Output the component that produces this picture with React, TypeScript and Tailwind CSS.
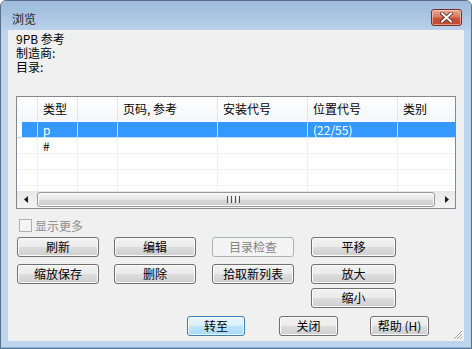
import React from "react";

const colW = ["w-[21px]", "w-[40px]", "w-[40px]", "w-[100px]", "w-[90px]", "w-[90px]", "w-[57px]"];
const headers = ["", "类型", "", "页码, 参考", "安装代号", "位置代号", "类别"];
const rows: { cells: string[]; sel?: boolean }[] = [
  { cells: ["", "p", "", "", "", "(22/55)", ""], sel: true },
  { cells: ["", "#", "", "", "", "", ""] },
  { cells: ["", "", "", "", "", "", ""] },
  { cells: ["", "", "", "", "", "", ""] },
  { cells: ["", "", "", "", "", "", ""] },
];

function Btn({
  label,
  w = "w-[82px]",
  variant = "normal",
}: {
  label: string;
  w?: string;
  variant?: "normal" | "default" | "disabled";
}) {
  const base = "h-[20px] rounded-[3px] border flex items-center justify-center text-[12px] leading-[14px] shrink-0";
  const v =
    variant === "default"
      ? "border-[#3c7fb1] bg-[linear-gradient(to_bottom,#eaf6fd_0%,#d9f0fc_50%,#bee6fd_50%,#a7d9f5_100%)] shadow-[inset_0_0_0_1px_#f4fbff] text-black"
      : variant === "disabled"
      ? "border-[#adb2b5] bg-[#f4f4f4] text-[#838383]"
      : "border-[#707070] bg-[linear-gradient(to_bottom,#f2f2f2_0%,#ebebeb_50%,#dddddd_50%,#cfcfcf_100%)] shadow-[inset_0_0_0_1px_#fcfcfc] text-black";
  return <div className={`${base} ${v} ${w}`}>{label}</div>;
}

export default function App() {
  return (
    <div className="w-[472px] h-[349px] flex flex-col bg-[#bcd4ec] border border-[#5b6f86] rounded-t-[6px] overflow-hidden font-['Noto_Sans_CJK_SC',sans-serif] text-[12px] text-black select-none">
      {/* Title bar */}
      <div className="h-[29px] flex items-start justify-between pt-[9px] pl-[11px] pr-[9px] bg-linear-to-b from-[#9cbadb] to-[#b9d1ea] shrink-0">
        <div className="leading-[17px] text-[12px] text-[#1b1b1b]">浏览</div>
        <div className="w-[31px] h-[17px] rounded-[3px] border border-[#7a2f25] bg-[linear-gradient(to_bottom,#e9ab9a_0%,#d77a66_45%,#c85439_55%,#c0462e_100%)] shadow-[inset_0_0_0_1px_rgba(255,220,210,0.55)] flex items-center justify-center -mt-[1px]">
          <svg width="13" height="11" viewBox="0 0 13 11">
            <path d="M2 1.5 L11 9.5 M11 1.5 L2 9.5" stroke="#5a2a22" strokeWidth="3.6" strokeLinecap="square" />
            <path d="M2 1.5 L11 9.5 M11 1.5 L2 9.5" stroke="#ffffff" strokeWidth="2" strokeLinecap="square" />
          </svg>
        </div>
      </div>

      {/* Client area row */}
      <div className="flex-1 flex px-[7px]">
        <div className="flex-1 bg-[#f0f0f0] flex flex-col relative">
          {/* Info text */}
          <div className="pl-[8px] pt-[2px] leading-[14px] text-[12px]">
            <div className="h-[14px]">9PB 参考</div>
            <div className="h-[14px]">制造商:</div>
            <div className="h-[14px]">目录:</div>
          </div>

          {/* List view */}
          <div className="mt-[22px] mx-[8px] h-[113px] border border-[#828790] bg-white flex flex-col">
            {/* Header */}
            <div className="h-[24px] flex bg-linear-to-b from-white to-[#f5f6f8] shrink-0">
              {headers.map((h, i) => (
                <div
                  key={i}
                  className={`${colW[i]} shrink-0 h-full flex items-center pl-[5px] whitespace-nowrap ${
                    i < headers.length - 1 ? "border-r border-[#e3e5e8]" : ""
                  }`}
                >
                  {h}
                </div>
              ))}
            </div>
            {/* Rows */}
            <div className="flex-1 overflow-hidden pt-[1px]">
              {rows.map((r, ri) => (
                <div key={ri} className="flex h-[16px]">
                  {r.cells.map((c, ci) => (
                    <div
                      key={ci}
                      className={`${colW[ci]} shrink-0 h-full border-b ${
                        ci < r.cells.length - 1 ? "border-r" : ""
                      } ${
                        r.sel
                          ? "border-[#bfe0ff] text-white"
                          : "border-[#f0f0f0] text-black"
                      } ${r.sel && ci > 0 ? "bg-[#3399ff]" : ""} flex`}
                    >
                      {r.sel && ci === 0 ? (
                        <div className="ml-[5px] flex-1 bg-[#3399ff]" />
                      ) : (
                        <div className="pl-[5px] leading-[15px] whitespace-nowrap">{c}</div>
                      )}
                    </div>
                  ))}
                </div>
              ))}
            </div>
            {/* Horizontal scrollbar */}
            <div className="h-[17px] flex bg-linear-to-b from-[#e8e8e8] to-[#f3f3f3] shrink-0">
              <div className="w-[17px] flex items-center justify-center">
                <svg width="4" height="7" viewBox="0 0 4 7">
                  <path d="M4 0 L0 3.5 L4 7 Z" fill="#1a1a1a" />
                </svg>
              </div>
              <div className="flex-1 mx-[3px] my-[1px] rounded-[3px] border border-[#979797] bg-[linear-gradient(to_bottom,#f5f5f5_0%,#e6e6e6_50%,#d6d6d6_51%,#cfcfcf_100%)] shadow-[inset_0_0_0_1px_#fafafa] flex items-center justify-center">
                <div className="flex gap-[1px] -ml-[6px]">
                  <div className="w-[1px] h-[7px] bg-[#505050]" />
                  <div className="w-[1px] h-[7px] bg-[#f8f8f8]" />
                  <div className="w-[1px] h-[7px] bg-[#505050]" />
                  <div className="w-[1px] h-[7px] bg-[#f8f8f8]" />
                  <div className="w-[1px] h-[7px] bg-[#505050]" />
                  <div className="w-[1px] h-[7px] bg-[#f8f8f8]" />
                  <div className="w-[1px] h-[7px] bg-[#505050]" />
                </div>
              </div>
              <div className="w-[17px] flex items-center justify-center">
                <svg width="4" height="7" viewBox="0 0 4 7">
                  <path d="M0 0 L4 3.5 L0 7 Z" fill="#1a1a1a" />
                </svg>
              </div>
            </div>
          </div>

          {/* Checkbox */}
          <div className="mt-[10px] ml-[11px] flex items-center h-[13px]">
            <div className="w-[13px] h-[13px] border border-[#b1b1b1] bg-[#f4f4f4] shrink-0" />
            <div className="ml-[3px] text-[#8d8d8d] leading-[13px]">显示更多</div>
          </div>

          {/* Button grid */}
          <div className="mt-[5px] ml-[9px] flex">
            <div className="flex flex-col gap-[7px]">
              <Btn label="刷新" />
              <Btn label="缩放保存" />
            </div>
            <div className="flex flex-col gap-[7px] ml-[15px]">
              <Btn label="编辑" />
              <Btn label="删除" />
            </div>
            <div className="flex flex-col gap-[7px] ml-[16px]">
              <Btn label="目录检查" variant="disabled" />
              <Btn label="拾取新列表" />
            </div>
            <div className="flex flex-col ml-[17px]">
              <Btn label="平移" w="w-[85px]" />
              <div className="mt-[7px]">
                <Btn label="放大" w="w-[85px]" />
              </div>
              <div className="mt-[4px]">
                <Btn label="缩小" w="w-[85px]" />
              </div>
            </div>
          </div>

          {/* Bottom buttons */}
          <div className="mt-[8px] ml-[179px] flex">
            <Btn label="转至" w="w-[58px]" variant="default" />
            <div className="ml-[34px]">
              <Btn label="关闭" w="w-[59px]" />
            </div>
            <div className="ml-[32px]">
              <Btn label="帮助 (H)" w="w-[59px]" />
            </div>
          </div>

          {/* Size grip */}
          <svg className="absolute right-[1px] bottom-[1px]" width="12" height="12" viewBox="0 0 12 12">
            <path d="M11 3 L3 11 M11 6 L6 11 M11 9 L9 11" stroke="#a0a0a0" strokeWidth="1" />
            <path d="M12 4 L4 12 M12 7 L7 12 M12 10 L10 12" stroke="#ffffff" strokeWidth="1" />
          </svg>
        </div>
      </div>
      <div className="h-[7px] shrink-0 border-b border-[#8fb6da]" />
    </div>
  );
}
